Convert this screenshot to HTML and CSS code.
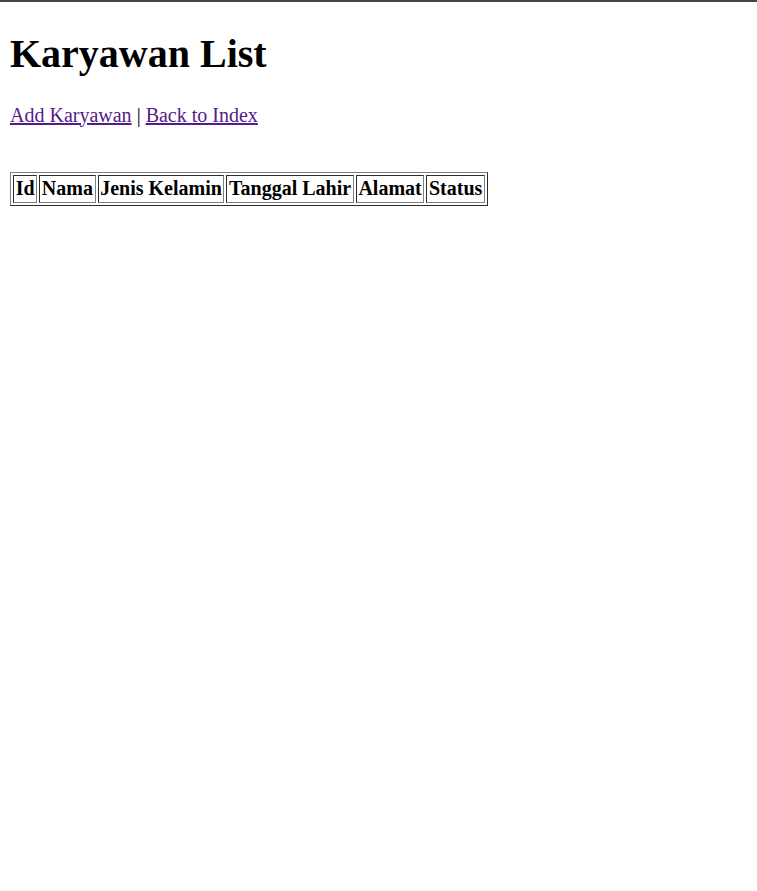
FILE: index.html
```html
<!DOCTYPE html>
<html>
<head>
<meta charset="utf-8">
<title>Karyawan List</title>
<link rel="stylesheet" href="styles.css">
</head>
<body class="page">
<h1 class="title">Karyawan List</h1>
<p class="nav"><a class="link" href="#">Add Karyawan</a> | <a class="link" href="#">Back to Index</a></p>
<br>
<table class="grid">
<thead>
<tr>
<th class="cell">Id</th>
<th class="cell">Nama</th>
<th class="cell">Jenis Kelamin</th>
<th class="cell">Tanggal Lahir</th>
<th class="cell">Alamat</th>
<th class="cell">Status</th>
</tr>
</thead>
<tbody></tbody>
</table>
</body>
</html>
```
FILE: styles.css
```css
html {
  border-top: 2px solid #444;
  background: #fff;
}
.page {
  zoom: 1.25;
  margin: 8px;
  font-family: "Liberation Serif", "Times New Roman", serif;
  font-size: 16px;
  color: #000;
}
.title {
  font-size: 32px;
  font-weight: bold;
  margin: 14.2px 0 21.44px;
}
.nav {
  margin: 16px 0 17.6px;
}
.link {
  color: #551a8b;
  text-decoration: underline;
}
.grid {
  border: 1px outset #808080;
  border-spacing: 2px;
  border-collapse: separate;
}
.cell {
  border: 1px inset #808080;
  padding: 1.2px 1.3px;
  font-weight: bold;
  text-align: center;
}
```
